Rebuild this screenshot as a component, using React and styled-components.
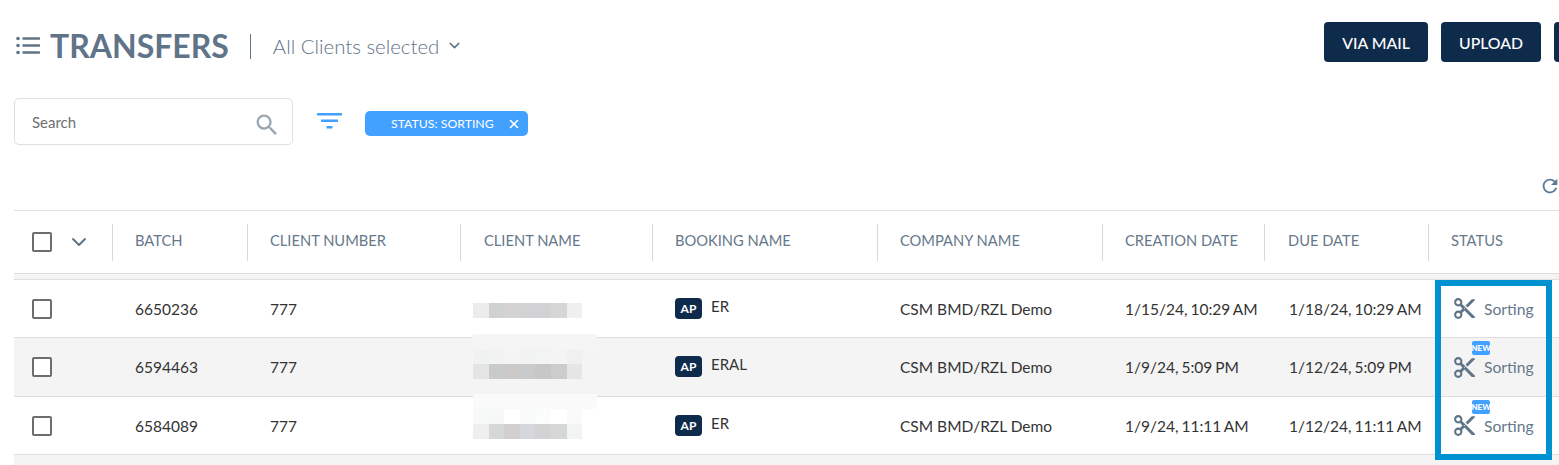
import React from 'react'
import styled, { createGlobalStyle } from 'styled-components'
import { ChevronDown, X } from 'lucide-react'
import { MdContentCut, MdRefresh, MdSearch } from 'react-icons/md'

const columns = '99px 135px 213px 192px 225px 225px 162px 164px 130px'

const headings = [
    { label: 'BATCH', pad: 22 },
    { label: 'CLIENT NUMBER', pad: 22 },
    { label: 'CLIENT NAME', pad: 23 },
    { label: 'BOOKING NAME', pad: 22 },
    { label: 'COMPANY NAME', pad: 22 },
    { label: 'CREATION DATE', pad: 22 },
    { label: 'DUE DATE', pad: 23 },
    { label: 'STATUS', pad: 22 },
]

const rows = [
    {
        batch: '6650236', booking: 'ER', created: '1/15/24, 10:29 AM', due: '1/18/24, 10:29 AM', isNew: false,
        height: 58, shaded: false, mosaicBottom: 19,
        mosaic: [['#ececeb', '#d0d2d1', '#d5d2d3', '#d2d2d4', '#d2d2d4', '#d5d7d6', '#efefef']],
        patch: false,
    },
    {
        batch: '6594463', booking: 'ERAL', created: '1/9/24, 5:09 PM', due: '1/12/24, 5:09 PM', isNew: true,
        height: 59, shaded: true, mosaicBottom: 17,
        mosaic: [
            ['#f0f1f1', '#f1f2f2', '#f4f4f4', '#f1f2f2', '#f2f3f3', '#f4f4f4', '#f0f0f0'],
            ['#e3e4e3', '#c9cbca', '#cbc8c8', '#c9cacc', '#c8c7c7', '#cbcdcc', '#e5e5e5'],
        ],
        patch: '#f5f5f5',
    },
    {
        batch: '6584089', booking: 'ER', created: '1/9/24, 11:11 AM', due: '1/12/24, 11:11 AM', isNew: true,
        height: 58, shaded: false, mosaicBottom: 15,
        mosaic: [
            ['#f7f8f8', '#f6f7f7', '#ffffff', '#f9fafa', '#fbfdfc', '#ffffff', '#fafafa'],
            ['#eff0ee', '#d5d8d7', '#d3cfd0', '#d5d7dc', '#d3d2d5', '#d5d8d6', '#f1f3f5'],
        ],
        patch: '#fafafa',
    },
]

function App() {
    return (
        <Page>
            <GlobalStyle />
            <Header>
                <TitleGroup>
                    <ListIcon viewBox="0 0 24 19">
                        <circle cx="2" cy="2.5" r="1.8" />
                        <circle cx="2" cy="9.5" r="1.8" />
                        <circle cx="2" cy="16.5" r="1.8" />
                        <rect x="6.5" y="1.2" width="17.5" height="2.6" rx="0.6" />
                        <rect x="6.5" y="8.2" width="17.5" height="2.6" rx="0.6" />
                        <rect x="6.5" y="15.2" width="17.5" height="2.6" rx="0.6" />
                    </ListIcon>
                    <Title>TRANSFERS</Title>
                    <Selector>
                        All Clients selected
                        <ChevronDown size={17} strokeWidth={2} />
                    </Selector>
                </TitleGroup>
                <Actions>
                    <ActionButton $width={104}>VIA MAIL</ActionButton>
                    <ActionButton $width={100}>UPLOAD</ActionButton>
                    <ActionButton $width={100} />
                </Actions>
            </Header>

            <Toolbar>
                <SearchBox>
                    <SearchText>Search</SearchText>
                    <SearchGlass size={28} color="#9aa5b0" />
                </SearchBox>
                <FilterIcon viewBox="0 0 25 16">
                    <rect x="0" y="0" width="25" height="2.4" rx="0.5" />
                    <rect x="4" y="6.5" width="17" height="2.4" rx="0.5" />
                    <rect x="9.5" y="13" width="6" height="2.4" rx="0.5" />
                </FilterIcon>
                <Chip>
                    STATUS: SORTING
                    <X size={14} strokeWidth={2.8} />
                </Chip>
            </Toolbar>

            <RefreshRow>
                <MdRefresh size={22} color="#5f7a94" />
            </RefreshRow>

            <Table>
                <HeadRow>
                    <HeadCell>
                        <Checkbox />
                        <ChevronDown size={24} strokeWidth={2} color="#5f7488" />
                    </HeadCell>
                    {headings.map((h) => (
                        <HeadCell key={h.label} $pad={h.pad} $text>{h.label}</HeadCell>
                    ))}
                </HeadRow>
                <HeadGap />
                {rows.map((r) => (
                    <Row key={r.batch} $height={r.height} $shaded={r.shaded}>
                        <Cell><Checkbox /></Cell>
                        <Cell $text>{r.batch}</Cell>
                        <Cell $text>777</Cell>
                        <NameCell>
                            <Mosaic $bottom={r.mosaicBottom}>
                                {r.patch && <MosaicPatch $color={r.patch} />}
                                {r.mosaic.map((line, i) => (
                                    <MosaicLine key={i}>
                                        {line.map((c, j) => <MosaicBlock key={j} $color={c} />)}
                                    </MosaicLine>
                                ))}
                            </Mosaic>
                        </NameCell>
                        <Cell $text>
                            <TypeBadge>AP</TypeBadge>
                            <BookingName>{r.booking}</BookingName>
                        </Cell>
                        <Cell $text>CSM BMD/RZL Demo</Cell>
                        <DateCell $text>{r.created}</DateCell>
                        <DueCell $text>{r.due}</DueCell>
                        <StatusCell>
                            {r.isNew && <NewBadge>NEW</NewBadge>}
                            <MdContentCut size={25} color="#5f7488" />
                            <StatusText>Sorting</StatusText>
                        </StatusCell>
                    </Row>
                ))}
                <TableRest />
                <Highlight />
            </Table>
        </Page>
    )
}

export default App

const GlobalStyle = createGlobalStyle`
html, body {
    margin: 0;
    padding: 0;
    background: #fff;
    overflow: hidden;
}
`

const Page = styled.div`
width: 1559px;
height: 465px;
overflow: hidden;
padding-left: 14px;
box-sizing: border-box;
font-family: Lato, "Open Sans", sans-serif;
color: #333;
`

const Header = styled.div`
display: flex;
align-items: center;
height: 40px;
padding-top: 22px;
`

const TitleGroup = styled.div`
display: flex;
align-items: center;
padding-top: 7px;
`

const ListIcon = styled.svg`
width: 24px;
height: 19px;
margin-left: 2px;
margin-right: 10px;
fill: #5f7488;
`

const Title = styled.h1`
position: relative;
margin: 0;
padding-right: 22px;
font-size: 32px;
font-weight: 700;
line-height: 40px;
color: #5f7488;
&:after {
    content: "";
    position: absolute;
    right: 0;
    top: 8px;
    height: 25px;
    width: 1px;
    background: #5f7488;
}
`

const Selector = styled.div`
display: flex;
align-items: center;
gap: 7px;
margin-left: 22px;
font-size: 20.4px;
font-weight: 300;
color: #5f7488;
`

const Actions = styled.div`
display: flex;
gap: 13px;
margin-left: auto;
margin-right: -95px;
`

const ActionButton = styled.button`
width: ${(p) => p.$width}px;
height: 40px;
padding: 0;
border: 0;
border-radius: 4px;
background: #0f2b4c;
color: #fff;
font-family: inherit;
font-size: 15.8px;
font-weight: 500;
`

const Toolbar = styled.div`
display: flex;
align-items: center;
margin-top: 36px;
`

const SearchBox = styled.div`
display: flex;
align-items: center;
justify-content: space-between;
box-sizing: border-box;
width: 279px;
height: 47px;
padding: 0 11px 0 17px;
border: 1px solid #dfdfdf;
border-radius: 5px;
`

const SearchText = styled.span`
font-size: 15px;
color: #6f6f6f;
`

const SearchGlass = styled(MdSearch)`
margin-top: 6px;
`

const FilterIcon = styled.svg`
width: 25px;
height: 16px;
margin-left: 24px;
margin-right: 23px;
margin-bottom: 2px;
fill: #42a0ff;
`

const Chip = styled.div`
display: flex;
align-items: center;
justify-content: space-between;
box-sizing: border-box;
width: 163px;
height: 25px;
margin-top: 4px;
padding: 0 7px 0 26px;
border-radius: 5px;
background: #42a0ff;
color: #fff;
font-size: 12.3px;
`

const RefreshRow = styled.div`
display: flex;
justify-content: flex-end;
height: 35px;
margin-top: 30px;
margin-right: -2px;
`

const Table = styled.div`
position: relative;
width: 1545px;
border-top: 1px solid #e0e0e0;
`

const HeadRow = styled.div`
display: grid;
grid-template-columns: ${columns};
align-items: center;
height: 62px;
border-bottom: 1px solid #dedede;
`

const HeadCell = styled.div`
display: flex;
align-items: center;
gap: 15px;
height: 37px;
box-sizing: border-box;
padding-left: ${(p) => (p.$text ? `${p.$pad}px` : '18px')};
padding-bottom: ${(p) => (p.$text ? '4px' : '0')};
font-size: 14.7px;
color: #66788a;
border-right: 1px solid #d8d8d8;
&:last-child { border-right: 0; }
`

const HeadGap = styled.div`
height: 5px;
background: #f4f4f4;
border-bottom: 1px solid #dedede;
`

const Row = styled.div`
display: grid;
grid-template-columns: ${columns};
align-items: center;
box-sizing: border-box;
height: ${(p) => p.$height}px;
background: ${(p) => (p.$shaded ? '#f4f4f4' : '#fff')};
border-bottom: 1px solid #dedede;
`

const TableRest = styled.div`
height: 12px;
background: #f4f4f4;
`

const Cell = styled.div`
display: flex;
align-items: center;
padding-left: ${(p) => (p.$text ? '22px' : '18px')};
font-size: 15.5px;
color: #333;
`

const DateCell = styled(Cell)`
word-spacing: -1px;
`

const DueCell = styled(DateCell)`
padding-left: 24px;
`

const NameCell = styled.div`
position: relative;
height: 100%;
`

const Mosaic = styled.div`
position: absolute;
left: 12px;
bottom: ${(p) => p.$bottom}px;
z-index: 2;
`

const MosaicPatch = styled.div`
width: 124px;
height: 15px;
background: ${(p) => p.$color};
`

const MosaicLine = styled.div`
display: flex;
height: 15px;
`

const MosaicBlock = styled.div`
width: 15.6px;
background: ${(p) => p.$color};
`

const Checkbox = styled.span`
display: block;
box-sizing: border-box;
width: 20px;
height: 20px;
border: 2px solid #6d6d6d;
border-radius: 2px;
background: #fff;
`

const TypeBadge = styled.span`
display: inline-flex;
align-items: center;
justify-content: center;
width: 27px;
height: 21px;
margin-top: -1px;
border-radius: 4px;
background: #0f2b4c;
color: #fff;
font-size: 12px;
font-weight: 700;
`

const BookingName = styled.span`
margin-left: 9px;
margin-top: -6px;
font-size: 15px;
`

const StatusCell = styled.div`
position: relative;
display: flex;
align-items: center;
gap: 7px;
height: 100%;
padding-left: 23px;
`

const NewBadge = styled.span`
position: absolute;
left: 43px;
top: 3px;
display: flex;
align-items: center;
justify-content: center;
width: 18px;
height: 14px;
border-radius: 2px;
background: #42a0ff;
color: #fff;
font-size: 8px;
font-weight: 900;
`

const StatusText = styled.span`
font-size: 15.7px;
color: #66788a;
`

const Highlight = styled.div`
position: absolute;
left: 1421px;
top: 69px;
width: 117px;
height: 180px;
box-sizing: border-box;
border: 6px solid #0091d0;
pointer-events: none;
`
